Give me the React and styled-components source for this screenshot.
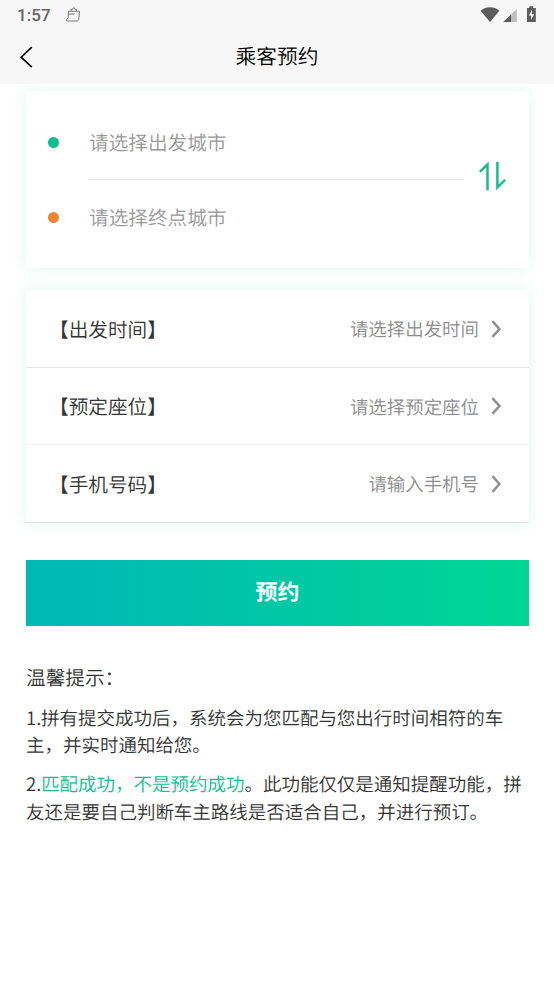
import styled, { createGlobalStyle } from "styled-components";

const rows = [
  { label: "【出发时间】", placeholder: "请选择出发时间" },
  { label: "【预定座位】", placeholder: "请选择预定座位" },
  { label: "【手机号码】", placeholder: "请输入手机号" },
];

export default function App() {
  return (
    <>
      <GlobalStyle />
      <Page lang="zh-CN">
        <Header>
          <StatusBar>
            <Clock>1:57</Clock>
            <BagIcon />
            <StatusIcons />
          </StatusBar>
          <TitleBar>
            <BackButton type="button" aria-label="返回">
              <svg width="14" height="22" viewBox="0 0 14 22" fill="none">
                <path d="M12.8 1.2L2.2 11.2L12.8 21.2" stroke="#000" strokeWidth="1.6" />
              </svg>
            </BackButton>
            <Title>乘客预约</Title>
          </TitleBar>
        </Header>
        <Content>
          <RouteCard>
            <Cities>
              <City>
                <Dot $color="#0abf90" />
                <CityText>请选择出发城市</CityText>
              </City>
              <Divider />
              <City>
                <Dot $color="#f28331" />
                <CityText>请选择终点城市</CityText>
              </City>
            </Cities>
            <SwapButton type="button" aria-label="交换">
              <svg width="28" height="30" viewBox="0 0 28 30" fill="none">
                <path
                  d="M1.8 10.9L9.5 3.5V29.3M19.4 0.7V26.4L27.2 18.9"
                  stroke="#17bd8f"
                  strokeWidth="2.5"
                />
              </svg>
            </SwapButton>
          </RouteCard>
          <FormCard>
            {rows.map((row) => (
              <Row key={row.label}>
                <Label>{row.label}</Label>
                <Value>{row.placeholder}</Value>
                <Chevron width="11" height="18" viewBox="0 0 11 18" fill="none">
                  <path d="M1.4 1.2L8.4 9L1.4 16.8" stroke="#8f8f8f" strokeWidth="2.5" />
                </Chevron>
              </Row>
            ))}
          </FormCard>
          <SubmitButton type="button">预约</SubmitButton>
          <Tips>
            <TipsTitle>温馨提示：</TipsTitle>
            <Tip>1.拼有提交成功后，系统会为您匹配与您出行时间相符的车主，并实时通知给您。</Tip>
            <Tip>
              2.<Highlight>匹配成功，不是预约成功</Highlight>
              。此功能仅仅是通知提醒功能，拼友还是要自己判断车主路线是否适合自己，并进行预订。
            </Tip>
          </Tips>
        </Content>
      </Page>
    </>
  );
}

function BagIcon() {
  return (
    <svg width="16" height="16" viewBox="0 0 16 16" fill="none" stroke="#777" strokeWidth="1">
      <path d="M3.4 4.2H14.4L13.8 12.6L12.2 14H1.8L1.5 12.8L3.2 10.4Z" strokeLinejoin="round" />
      <path d="M6 4V2.3H7.4L8 1H9.4L10 2.3H11.4V4M4 7H9.8" />
    </svg>
  );
}

function StatusIcons() {
  return (
    <svg width="57" height="18" viewBox="0 0 57 18" fill="#5c5c5c">
      <path d="M0.6 4.8C6 0.2 14 0.2 19.4 4.8L10 16Z" />
      <path d="M36.8 3V16H23.3Z" fill="#bdbdbd" />
      <path d="M31 8.6V16H23.3Z" />
      <path d="M49.2 0.3H53.2V2H55.8V16H47V2H49.2Z" />
      <path d="M52 3.8L48.8 9.6H51V14L54.2 8.2H52Z" fill="#f7f7f7" />
    </svg>
  );
}

const GlobalStyle = createGlobalStyle`
  * {
    box-sizing: border-box;
  }

  body {
    margin: 0;
    background: #fff;
    font-family: "Noto Sans CJK SC", sans-serif;
    font-weight: 350;
    text-rendering: geometricPrecision;
  }

  button {
    padding: 0;
    border: 0;
    background: none;
    font-family: inherit;
    text-rendering: inherit;
  }

  svg {
    display: block;
    flex: none;
  }
`;

const Page = styled.div`
  height: 984px;
  overflow: hidden;
  color: #333;
`;

const Header = styled.header`
  height: 84px;
  background: #f7f7f7;
`;

const StatusBar = styled.div`
  display: flex;
  align-items: center;
  height: 30px;
  padding: 0 17px;

  svg:last-child {
    margin-left: auto;
  }
`;

const Clock = styled.span`
  width: 48px;
  padding-top: 2px;
  color: #666;
  font: 500 17px/28px Roboto, sans-serif;
  letter-spacing: 0.1px;
`;

const TitleBar = styled.div`
  display: grid;
  grid-template-columns: 60px 1fr 60px;
  align-items: center;
  height: 54px;
`;

const BackButton = styled.button`
  padding-left: 19px;
`;

const Title = styled.h1`
  margin: 0;
  padding-bottom: 4px;
  color: #000;
  font-size: 20.7px;
  font-weight: 350;
  line-height: 50px;
  text-align: center;
`;

const Content = styled.main`
  height: 900px;
  padding: 7px 25px 0 26px;
  overflow: hidden;
`;

const Card = styled.section`
  background: #fff;
  box-shadow: 0 0 15px rgba(10, 200, 145, 0.13);
`;

const RouteCard = styled(Card)`
  display: flex;
  align-items: center;
  height: 177px;
  padding: 0 22px;
`;

const Cities = styled.div`
  width: 416px;
`;

const City = styled.div`
  display: flex;
  align-items: center;
  height: 74px;
`;

const Dot = styled.i`
  width: 11px;
  height: 11px;
  margin-right: 30px;
  border-radius: 50%;
  background: ${({ $color }) => $color};
`;

const CityText = styled.span`
  padding-bottom: 2px;
  color: #999;
  font-size: 19.65px;
`;

const Divider = styled.div`
  height: 1px;
  margin-left: 40px;
  background: #e8e8e8;
`;

const SwapButton = styled.button`
  margin: -7px 0 0 14px;
`;

const FormCard = styled(Card)`
  margin-top: 22px;
`;

const Row = styled.div`
  display: flex;
  align-items: center;
  height: 77.5px;
  padding: 0 27px 0 23px;
  border-bottom: 1px solid #e2e4e3;

  &:nth-child(2) {
    border-color: #f3f3f3;
  }
`;

const Label = styled.span`
  flex: 1;
  font-size: 19.65px;
`;

const Value = styled.span`
  margin-right: 12px;
  padding-top: 2px;
  color: #8c8c8c;
  font-size: 18.46px;
`;

const Chevron = styled.svg`
  margin-top: 1px;
`;

const SubmitButton = styled.button`
  display: block;
  width: 100%;
  height: 66px;
  margin-top: 37px;
  padding-bottom: 3px;
  background: linear-gradient(90deg, #00b7b7, #00d694);
  color: #fff;
  font-size: 22px;
  font-weight: 700;
  line-height: 60px;
`;

const Tips = styled.section`
  margin-top: 36px;
`;

const TipsTitle = styled.h2`
  margin: 0 0 13px;
  font-size: 19.65px;
  font-weight: 350;
  line-height: 30px;
`;

const Tip = styled.p`
  margin: 0 0 11px;
  font-size: 18.49px;
  line-height: 27.8px;
`;

const Highlight = styled.span`
  color: #0abf90;
`;
